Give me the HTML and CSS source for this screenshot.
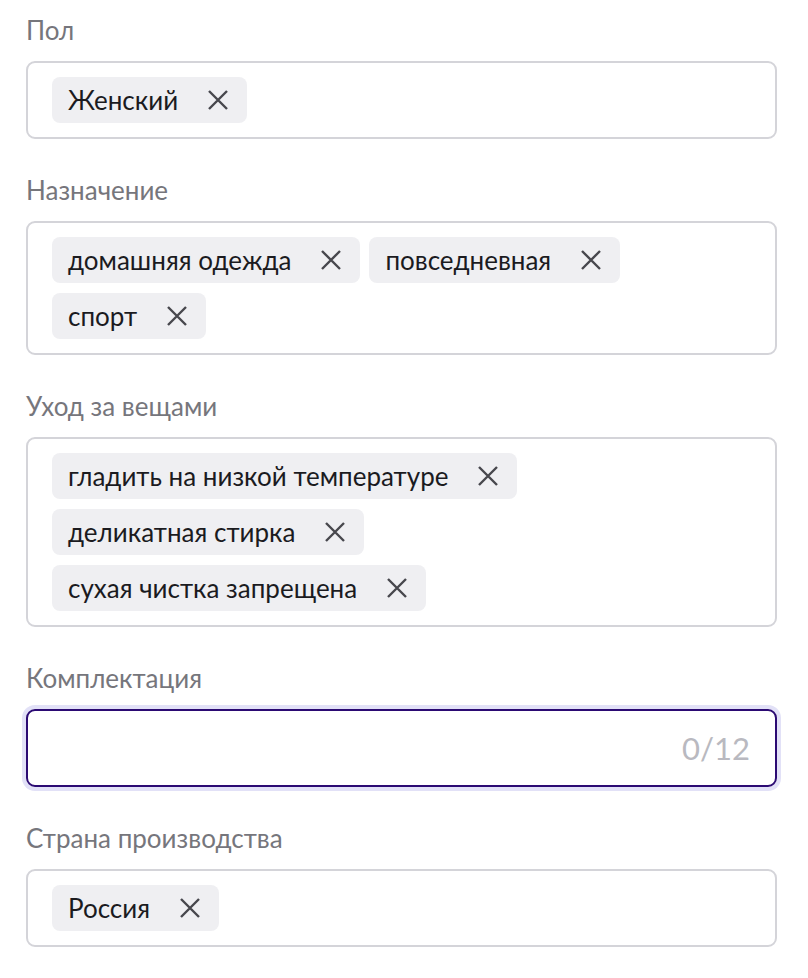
FILE: index.html
```html
<!DOCTYPE html>
<html lang="ru">
<head>
<meta charset="utf-8">
<link rel="stylesheet" href="styles.css">
</head>
<body>
<div class="form">
  <div class="field">
    <div class="label">Пол</div>
    <div class="box">
      <span class="chip">Женский<svg class="x" viewBox="0 0 22 22"><path d="M2 2L20 20M20 2L2 20"/></svg></span>
    </div>
  </div>
  <div class="field">
    <div class="label">Назначение</div>
    <div class="box">
      <span class="chip">домашняя одежда<svg class="x" viewBox="0 0 22 22"><path d="M2 2L20 20M20 2L2 20"/></svg></span>
      <span class="chip">повседневная<svg class="x" viewBox="0 0 22 22"><path d="M2 2L20 20M20 2L2 20"/></svg></span>
      <span class="chip">спорт<svg class="x" viewBox="0 0 22 22"><path d="M2 2L20 20M20 2L2 20"/></svg></span>
    </div>
  </div>
  <div class="field">
    <div class="label">Уход за вещами</div>
    <div class="box">
      <span class="chip">гладить на низкой температуре<svg class="x" viewBox="0 0 22 22"><path d="M2 2L20 20M20 2L2 20"/></svg></span>
      <span class="chip">деликатная стирка<svg class="x" viewBox="0 0 22 22"><path d="M2 2L20 20M20 2L2 20"/></svg></span>
      <span class="chip">сухая чистка запрещена<svg class="x" viewBox="0 0 22 22"><path d="M2 2L20 20M20 2L2 20"/></svg></span>
    </div>
  </div>
  <div class="field">
    <div class="label">Комплектация</div>
    <div class="box focus">
      <span class="counter">0/12</span>
    </div>
  </div>
  <div class="field">
    <div class="label">Страна производства</div>
    <div class="box">
      <span class="chip">Россия<svg class="x" viewBox="0 0 22 22"><path d="M2 2L20 20M20 2L2 20"/></svg></span>
    </div>
  </div>
</div>
</body>
</html>
```
FILE: styles.css
```css
* { box-sizing: border-box; }
html, body { margin: 0; background: #fff; }
body {
  font-family: Lato, "Noto Sans", sans-serif;
  padding: 15px 31px 0 26px;
}
.form { display: flex; flex-direction: column; gap: 36px; }
.field { display: flex; flex-direction: column; gap: 16px; }
.label {
  font-size: 26px;
  line-height: 30px;
  color: #76767c;
}
.box {
  border: 2px solid #d4d4d9;
  border-radius: 9px;
  padding: 14px 34px 14px 24px;
  display: flex;
  flex-wrap: wrap;
  gap: 10px 9px;
  min-height: 78px;
}
.chip {
  display: inline-flex;
  align-items: center;
  height: 46px;
  padding: 0 18px 0 16px;
  background: #efeff2;
  border-radius: 8px;
  font-size: 26px;
  color: #1b1b1f;
  gap: 29px;
}
.x { width: 22px; height: 22px; }
.x path { stroke: #47474d; stroke-width: 2.4; fill: none; }
.box.focus {
  border-color: #2b0a73;
  box-shadow: 0 0 0 4px #e2e1f7;
  justify-content: flex-end;
  align-items: center;
  padding: 0 25px;
}
.counter {
  font-size: 31px;
  color: #b9b9c0;
}
```
